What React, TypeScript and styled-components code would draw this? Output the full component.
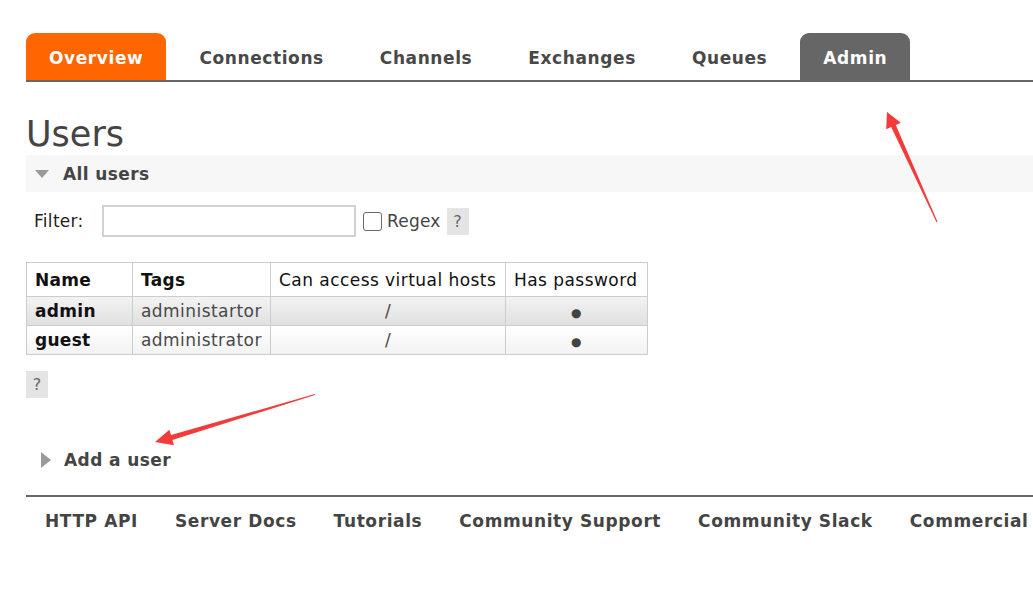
import React from "react";
import styled, { createGlobalStyle } from "styled-components";

const GlobalStyle = createGlobalStyle`
  html, body { margin: 0; padding: 0; background: #fff; }
  body {
    font-family: "DejaVu Sans", Verdana, sans-serif;
    color: #484848;
    font-size: 17px;
  }
  * { box-sizing: border-box; }
`;

const Page = styled.div`
  position: relative;
  width: 1033px;
  height: 611px;
  overflow: hidden;
  padding: 33px 0 0 26px;
`;

const Nav = styled.nav`
  display: flex;
  gap: 10px;
  border-bottom: 2px solid #666;
`;

const Tab = styled.a<{ $bg?: string }>`
  display: flex;
  align-items: center;
  height: 47px;
  padding: 2px 23px 0;
  border-radius: 9px 9px 0 0;
  background: ${(p) => p.$bg ?? "transparent"};
  color: ${(p) => (p.$bg ? "#fff" : "#484848")};
  font-weight: bold;
  font-size: 17px;
  letter-spacing: 0.6px;
  text-decoration: none;
`;

const Title = styled.h1`
  margin: 31px 0 0;
  height: 42px;
  line-height: 42px;
  font-size: 35px;
  font-weight: normal;
  color: #444;
`;

const SectionBar = styled.div`
  display: flex;
  align-items: center;
  height: 37px;
  background: #f7f7f7;
  padding: 1px 0 0 9px;
  gap: 14px;
`;

const SectionHead = styled.div`
  display: flex;
  align-items: center;
  height: 30px;
  padding-left: 15px;
  gap: 13px;
`;

const TriDown = styled.span`
  width: 0;
  height: 0;
  border-left: 7.5px solid transparent;
  border-right: 7.5px solid transparent;
  border-top: 8px solid #9a9a9a;
`;

const TriRight = styled.span`
  width: 0;
  height: 0;
  border-top: 8px solid transparent;
  border-bottom: 8px solid transparent;
  border-left: 10px solid #9a9a9a;
`;

const SectionTitle = styled.span`
  font-weight: bold;
  font-size: 17px;
  letter-spacing: 0.4px;
  color: #444;
`;

const FilterRow = styled.div`
  display: flex;
  align-items: center;
  margin-top: 13px;
  padding-left: 8px;
`;

const Label = styled.span`
  width: 68px;
  color: #222;
  letter-spacing: 0.3px;
`;

const TextInput = styled.input`
  width: 254px;
  height: 32px;
  border: 2px solid #d2d2d2;
  padding: 0 4px;
  font: inherit;
`;

const Check = styled.span`
  width: 19px;
  height: 19px;
  border: 1px solid #6a6a6a;
  border-radius: 3px;
  margin-left: 7px;
  background: #fff;
`;

const CheckLabel = styled.span`
  margin-left: 5px;
  color: #444;
  letter-spacing: 0.2px;
`;

const Help = styled.span<{ $ml?: number }>`
  display: inline-flex;
  align-items: center;
  justify-content: center;
  width: 22px;
  height: 27px;
  margin-left: ${(p) => p.$ml ?? 0}px;
  background: #e4e4e4;
  color: #666;
  font-size: 16px;
`;

const HelpBlock = styled.div`
  margin-top: 16px;
  display: flex;
`;

const Table = styled.table`
  margin-top: 25px;
  border-collapse: collapse;
  table-layout: fixed;
  width: 621px;
  border: 1px solid #ccc;
`;

const HeadRow = styled.tr`
  height: 34px;
  background: #fff;
`;

const Row = styled.tr<{ $alt?: boolean }>`
  height: 29px;
  background: ${(p) =>
    p.$alt
      ? "linear-gradient(#ffffff, #f2f2f2)"
      : "linear-gradient(#f3f3f3, #dfdfdf)"};
`;

const Th = styled.th<{ $bold?: boolean }>`
  border: 1px solid #ccc;
  padding: 1px 8px 0;
  text-align: left;
  font-weight: ${(p) => (p.$bold ? "bold" : "normal")};
  color: #111;
  font-size: 17px;
  letter-spacing: ${(p) => (p.$bold ? "0.3px" : "0.45px")};
  white-space: nowrap;
  overflow: hidden;
`;

const Td = styled.td<{ $bold?: boolean; $center?: boolean }>`
  border: 1px solid #ccc;
  padding: 0 8px;
  text-align: ${(p) => (p.$center ? "center" : "left")};
  font-weight: ${(p) => (p.$bold ? "bold" : "normal")};
  color: ${(p) => (p.$bold ? "#111" : "#484848")};
  font-size: 17px;
  letter-spacing: ${(p) => (p.$bold ? "0.3px" : "0.45px")};
  white-space: nowrap;
  overflow: hidden;
`;

const Dot = styled.span`
  font-size: 12px;
  color: #444;
`;

const AddSection = styled.div`
  margin-top: 47px;
`;

const Footer = styled.footer`
  margin-top: 20px;
  border-top: 2px solid #666;
  display: flex;
  gap: 37px;
  padding: 14px 0 0 19px;
  white-space: nowrap;
`;

const FooterLink = styled.a`
  font-weight: bold;
  font-size: 17px;
  letter-spacing: 0.6px;
  color: #444;
  text-decoration: none;
  line-height: 20px;
`;

const Overlay = styled.svg`
  position: absolute;
  top: 0;
  left: 0;
  pointer-events: none;
`;

const tabs: { label: string; bg?: string }[] = [
  { label: "Overview", bg: "#ff6600" },
  { label: "Connections" },
  { label: "Channels" },
  { label: "Exchanges" },
  { label: "Queues" },
  { label: "Admin", bg: "#666666" },
];

const users = [
  { name: "admin", tags: "administartor", vhosts: "/" },
  { name: "guest", tags: "administrator", vhosts: "/" },
];

const footerLinks = [
  "HTTP API",
  "Server Docs",
  "Tutorials",
  "Community Support",
  "Community Slack",
  "Commercial",
];

export default function App() {
  return (
    <>
      <GlobalStyle />
      <Page>
        <Nav>
          {tabs.map((t) => (
            <Tab key={t.label} $bg={t.bg}>
              {t.label}
            </Tab>
          ))}
        </Nav>

        <Title>Users</Title>

        <SectionBar>
          <TriDown />
          <SectionTitle>All users</SectionTitle>
        </SectionBar>

        <FilterRow>
          <Label>Filter:</Label>
          <TextInput type="text" />
          <Check />
          <CheckLabel>Regex</CheckLabel>
          <Help $ml={6}>?</Help>
        </FilterRow>

        <Table>
          <colgroup>
            <col style={{ width: 106 }} />
            <col style={{ width: 138 }} />
            <col style={{ width: 235 }} />
            <col style={{ width: 142 }} />
          </colgroup>
          <thead>
            <HeadRow>
              <Th $bold>Name</Th>
              <Th $bold>Tags</Th>
              <Th>Can access virtual hosts</Th>
              <Th>Has password</Th>
            </HeadRow>
          </thead>
          <tbody>
            {users.map((u, i) => (
              <Row key={u.name} $alt={i % 2 === 1}>
                <Td $bold>{u.name}</Td>
                <Td>{u.tags}</Td>
                <Td $center>{u.vhosts}</Td>
                <Td $center>
                  <Dot>●</Dot>
                </Td>
              </Row>
            ))}
          </tbody>
        </Table>

        <HelpBlock>
          <Help>?</Help>
        </HelpBlock>

        <AddSection>
          <SectionHead>
            <TriRight />
            <SectionTitle>Add a user</SectionTitle>
          </SectionHead>
        </AddSection>

        <Footer>
          {footerLinks.map((l) => (
            <FooterLink key={l}>{l}</FooterLink>
          ))}
        </Footer>

        <Overlay width="1033" height="611" viewBox="0 0 1033 611">
          <polygon
            fill="#f43b3b"
            points="937.5,221.8 895.8,125 900.8,122.7 887,112 886.2,129.3 891.2,127 936.5,222.2"
          />
          <polygon
            fill="#f43b3b"
            points="315.1,395 172.4,439.9 174,445.2 155,442 169.4,429.8 171,435.1 314.9,394"
          />
        </Overlay>
      </Page>
    </>
  );
}
